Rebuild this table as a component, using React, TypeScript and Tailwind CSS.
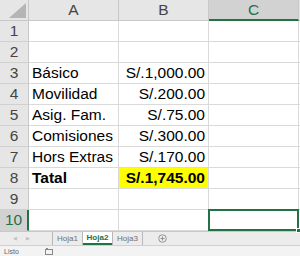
import { Fragment } from "react";
import clsx from "clsx";

type Row = {
  label?: string;
  amount?: string;
  bold?: boolean;
  highlight?: boolean;
};

const ROWS: Row[] = [
  {},
  {},
  { label: "Básico", amount: "S/.1,000.00" },
  { label: "Movilidad", amount: "S/.200.00" },
  { label: "Asig. Fam.", amount: "S/.75.00" },
  { label: "Comisiones", amount: "S/.300.00" },
  { label: "Hors Extras", amount: "S/.170.00" },
  { label: "Tatal", amount: "S/.1,745.00", bold: true, highlight: true },
  {},
  {}
];

const ACTIVE_ROW = 10;

const HEAD = "flex h-[21px] items-center justify-center border-b border-r border-[#c8c8c8] text-[#444]";
const CELL = "flex h-[21px] items-center border-b border-r border-[#dadada] px-[3px] text-black";

export default function App() {
  return (
    <div
      className="flex h-[256px] w-[300px] flex-col overflow-hidden bg-white text-[15.5px] leading-none"
      style={{ fontFamily: '"Liberation Sans", Arial, sans-serif' }}
    >
      <div className="grid grid-cols-[29px_90px_90px_90px_1fr]">
        <div className={clsx(HEAD, "relative bg-[#e6e6e6]")}>
          <svg className="absolute bottom-[2px] right-[2px]" width="17" height="15" viewBox="0 0 17 15">
            <polygon points="17,0 17,15 0,15" fill="#b5b5b5" />
          </svg>
        </div>
        <div className={clsx(HEAD, "bg-[#e6e6e6]")}>A</div>
        <div className={clsx(HEAD, "bg-[#e6e6e6]")}>B</div>
        <div className={clsx(HEAD, "border-b-2 border-b-[#217346] bg-[#d2d2d2] text-[#217346]")}>C</div>
        <div className={clsx(HEAD, "bg-[#e6e6e6]")} />

        {ROWS.map((row, i) => {
          const n = i + 1;
          const active = n === ACTIVE_ROW;
          return (
            <Fragment key={n}>
              <div
                className={clsx(
                  HEAD,
                  "border-b-[#d0d0d0]",
                  active ? "border-r-2 border-r-[#217346] bg-[#d2d2d2] text-[#217346]" : "bg-[#e6e6e6]"
                )}
              >
                {n}
              </div>
              <div className={clsx(CELL, "bg-white", row.bold && "font-bold")}>{row.label}</div>
              <div
                className={clsx(
                  CELL,
                  "justify-end",
                  row.bold && "font-bold",
                  row.highlight ? "bg-[#ffff00]" : "bg-white"
                )}
              >
                {row.amount}
              </div>
              <div className={clsx(CELL, "relative bg-white")}>
                {active && (
                  <>
                    <div className="absolute -left-px -top-px bottom-[-1px] right-[-1px] border-2 border-[#217346]" />
                    <div className="absolute bottom-[-3px] right-[-3px] h-[5px] w-[5px] border border-white bg-[#217346]" />
                  </>
                )}
              </div>
              <div className={clsx(CELL, "bg-white")} />
            </Fragment>
          );
        })}
      </div>

      <div className="flex h-[14px] items-stretch border-t border-[#c8c8c8] bg-[#ececec] text-[8px] text-[#6f6f6f]">
        <div className="flex w-[52px] items-center gap-[9px] pl-[13px] text-[5px] text-[#c0c0c0]">
          <span>◀</span>
          <span>▶</span>
        </div>
        <div className="flex w-[31px] items-center justify-center border-l border-r border-[#b8b8b8]">Hoja1</div>
        <div className="flex w-[29px] items-center justify-center border-b-2 border-[#217346] bg-white font-bold text-[#217346]">
          Hoja2
        </div>
        <div className="flex w-[31px] items-center justify-center border-l border-r border-[#b8b8b8]">Hoja3</div>
        <div className="flex items-center pl-[15px]">
          <svg width="9" height="9" viewBox="0 0 10 10">
            <circle cx="5" cy="5" r="4.2" fill="none" stroke="#8a8a8a" strokeWidth="1" />
            <path d="M5 2.8v4.4M2.8 5h4.4" stroke="#8a8a8a" strokeWidth="1" />
          </svg>
        </div>
      </div>

      <div className="flex flex-1 items-center border-t border-[#d0d0d0] bg-[#f3f3f3] pl-[4px] text-[7px] text-[#666]">
        <span>Listo</span>
        <svg className="ml-[26px]" width="8" height="7" viewBox="0 0 8 7">
          <rect x="0.5" y="1.5" width="7" height="5" fill="none" stroke="#888" strokeWidth="1" />
          <rect x="1" y="0" width="2" height="2" fill="#888" />
        </svg>
      </div>
    </div>
  );
}
